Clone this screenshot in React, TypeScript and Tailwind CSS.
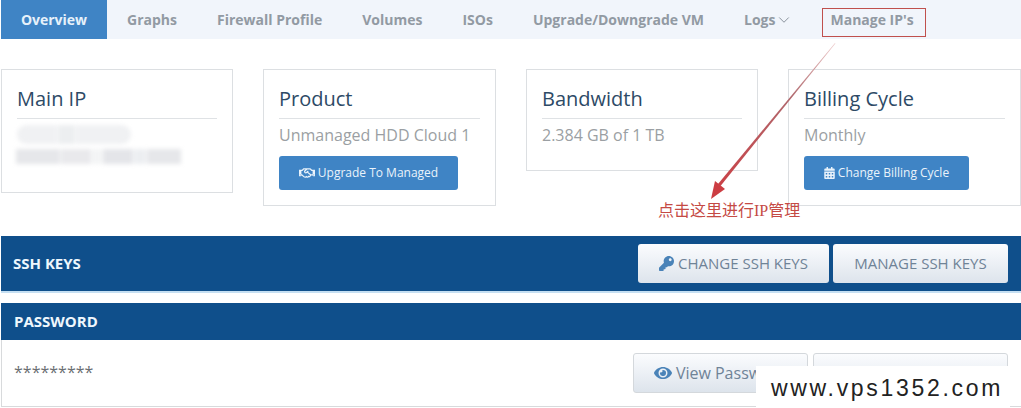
import { ChevronDown } from 'lucide-react';
import { FaCalendarAlt, FaEye, FaKey, FaRegHandshake } from 'react-icons/fa';
import { ReactNode } from 'react';

const tabs = ['Graphs', 'Firewall Profile', 'Volumes', 'ISOs', 'Upgrade/Downgrade VM'];

function Card({ title, width, children }: { title: string; width: string; children: ReactNode }) {
  return (
    <section className={`${width} shrink-0 border border-[#dcdfe2] bg-white px-[15px] pt-[15px]`}>
      <h3 className="border-b border-[#dfe2e5] pb-[5px] text-[20px] leading-[28px] text-[#2d4a66]">{title}</h3>
      {children}
    </section>
  );
}

function BlueButton({ width, icon, label }: { width: string; icon: ReactNode; label: string }) {
  return (
    <button className={`${width} mt-[9px] mb-[15px] flex h-[34px] items-center justify-center gap-[3px] rounded-[3px] bg-[#3f84c5] text-[12px] text-[#eaf3fb]`}>
      {icon}
      {label}
    </button>
  );
}

export default function App() {
  return (
    <div className="relative h-[408px] w-[1021px] overflow-hidden bg-white font-['Open_Sans',sans-serif]">
      <nav className="ml-px flex h-[39px] items-center bg-[#f1f5fb] text-[14px] font-bold text-[#929aa3]">
        <a className="flex h-full w-[106px] items-center justify-center bg-[#3f84c5] text-[#e6f1fa]">Overview</a>
        {tabs.map((tab) => (
          <a key={tab} className="px-5">{tab}</a>
        ))}
        <a className="flex items-center pl-5 pr-[17px]">
          Logs
          <ChevronDown className="ml-0 h-[18px] w-[18px] text-[#7f8892]" strokeWidth={1.2} />
        </a>
        <a className="px-5">Manage IP's</a>
      </nav>

      <div className="mt-[30px] flex items-start gap-[30px] pl-px">
        <Card title="Main IP" width="w-[232px]">
          <div className="mt-[6px] mb-[28px] flex flex-col gap-[5px] blur-[2px]">
            <div className="flex h-[19px] w-[114px] gap-px overflow-hidden rounded-full">
              <div className="w-[40px] bg-[#f0f1f3]" />
              <div className="w-[18px] bg-[#eceef0]" />
              <div className="w-[55px] bg-[#f0f1f3]" />
            </div>
            <div className="-ml-px flex h-[15px] w-[165px] gap-px">
              <div className="w-[44px] bg-[#e6e7ea]" />
              <div className="w-[30px] bg-[#e9e9ec]" />
              <div className="w-[10px] bg-[#f3f4f5]" />
              <div className="w-[30px] bg-[#e4e5e9]" />
              <div className="w-[12px] bg-[#eceef1]" />
              <div className="w-[34px] bg-[#e6e7ea]" />
            </div>
          </div>
        </Card>

        <Card title="Product" width="w-[233px]">
          <p className="mt-[4px] text-[16px] leading-[24px] text-[#9b9fa3]">Unmanaged HDD Cloud 1</p>
          <BlueButton width="w-[179px]" icon={<FaRegHandshake className="h-[16px] w-[16px]" />} label="Upgrade To Managed" />
        </Card>

        <Card title="Bandwidth" width="w-[232px]">
          <p className="mt-[4px] mb-[23px] text-[16px] leading-[24px] text-[#9b9fa3]">2.384 GB of 1 TB</p>
        </Card>

        <Card title="Billing Cycle" width="w-[233px]">
          <p className="mt-[4px] text-[16px] leading-[24px] text-[#9b9fa3]">Monthly</p>
          <BlueButton width="w-[165px]" icon={<FaCalendarAlt className="h-[12px] w-[11px]" />} label="Change Billing Cycle" />
        </Card>
      </div>

      <div className="mt-[30px] ml-px flex h-[57px] items-center justify-between border-b-2 border-[#c5dff2] bg-[#0f4f8b] pr-[13px] pl-[12px]">
        <h2 className="text-[15px] font-bold text-[#eef7fd]">SSH KEYS</h2>
        <div className="flex gap-[4px]">
          <button className="flex h-[39px] w-[191px] items-center justify-center gap-[4px] rounded-[3px] bg-gradient-to-b from-[#fbfcfe] to-[#dde4ec] text-[15px] text-[#6f8397]">
            <FaKey className="h-[15px] w-[15px] text-[#4a83b8]" />
            CHANGE SSH KEYS
          </button>
          <button className="h-[39px] w-[175px] rounded-[3px] bg-gradient-to-b from-[#fbfcfe] to-[#dde4ec] text-[15px] text-[#6f8397]">
            MANAGE SSH KEYS
          </button>
        </div>
      </div>

      <div className="mt-[10px] ml-px flex h-[37px] items-center bg-[#0f4f8b] pl-[13px]">
        <h2 className="text-[15px] font-bold text-[#eef7fd]">PASSWORD</h2>
      </div>
      <div className="ml-px flex h-[67px] items-center justify-between border-b border-l border-[#d8dadc] pr-[13px] pl-[12px]">
        <span className="pb-[2px] text-[16px] text-[#6b6f73]">*********</span>
        <div className="flex gap-[5px]">
          <button className="flex h-[40px] w-[175px] items-center justify-center gap-[4px] rounded-[3px] border border-[#d4d8dc] bg-gradient-to-b from-[#fbfcfe] to-[#dde4ec] text-[16px] whitespace-nowrap text-[#6f8397]">
            <FaEye className="h-[18px] w-[18px] text-[#4a83b8]" />
            View Password
          </button>
          <button className="h-[40px] w-[195px] rounded-[3px] border border-[#d4d8dc] bg-gradient-to-b from-[#fbfcfe] to-[#dde4ec]" />
        </div>
      </div>

      {/* annotations added over the page */}
      <div className="absolute top-[8px] left-[822px] h-[29px] w-[104px] border border-[#c0504d]" />
      <svg className="absolute top-0 left-0 h-[408px] w-[1021px]" viewBox="0 0 1021 408" fill="none">
        <defs>
          <linearGradient id="arrow" x1="835" y1="43" x2="712" y2="198" gradientUnits="userSpaceOnUse">
            <stop offset="0" stopColor="#edc9c9" />
            <stop offset="0.35" stopColor="#b0686d" />
            <stop offset="1" stopColor="#cc3d42" />
          </linearGradient>
        </defs>
        <path d="M835 43L835.4 43.4L720.5 186L718 184Z" fill="url(#arrow)" />
        <path d="M711 199L715 181L725 189Z" fill="#cc3d42" />
      </svg>
      <p className="absolute top-[201px] left-[658px] font-['Liberation_Serif','Noto_Sans_CJK_SC',serif] text-[16px] leading-[20px] text-[#c54a44]">
        点击这里进行IP管理
      </p>
      <div className="absolute top-[366px] left-[756px] flex h-[42px] w-[254px] items-center justify-center bg-white pt-[2px] pl-[8px] font-['Liberation_Sans',sans-serif] text-[23px] tracking-[2.7px] text-[#222222]">
        www.vps1352.com
      </div>
    </div>
  );
}
